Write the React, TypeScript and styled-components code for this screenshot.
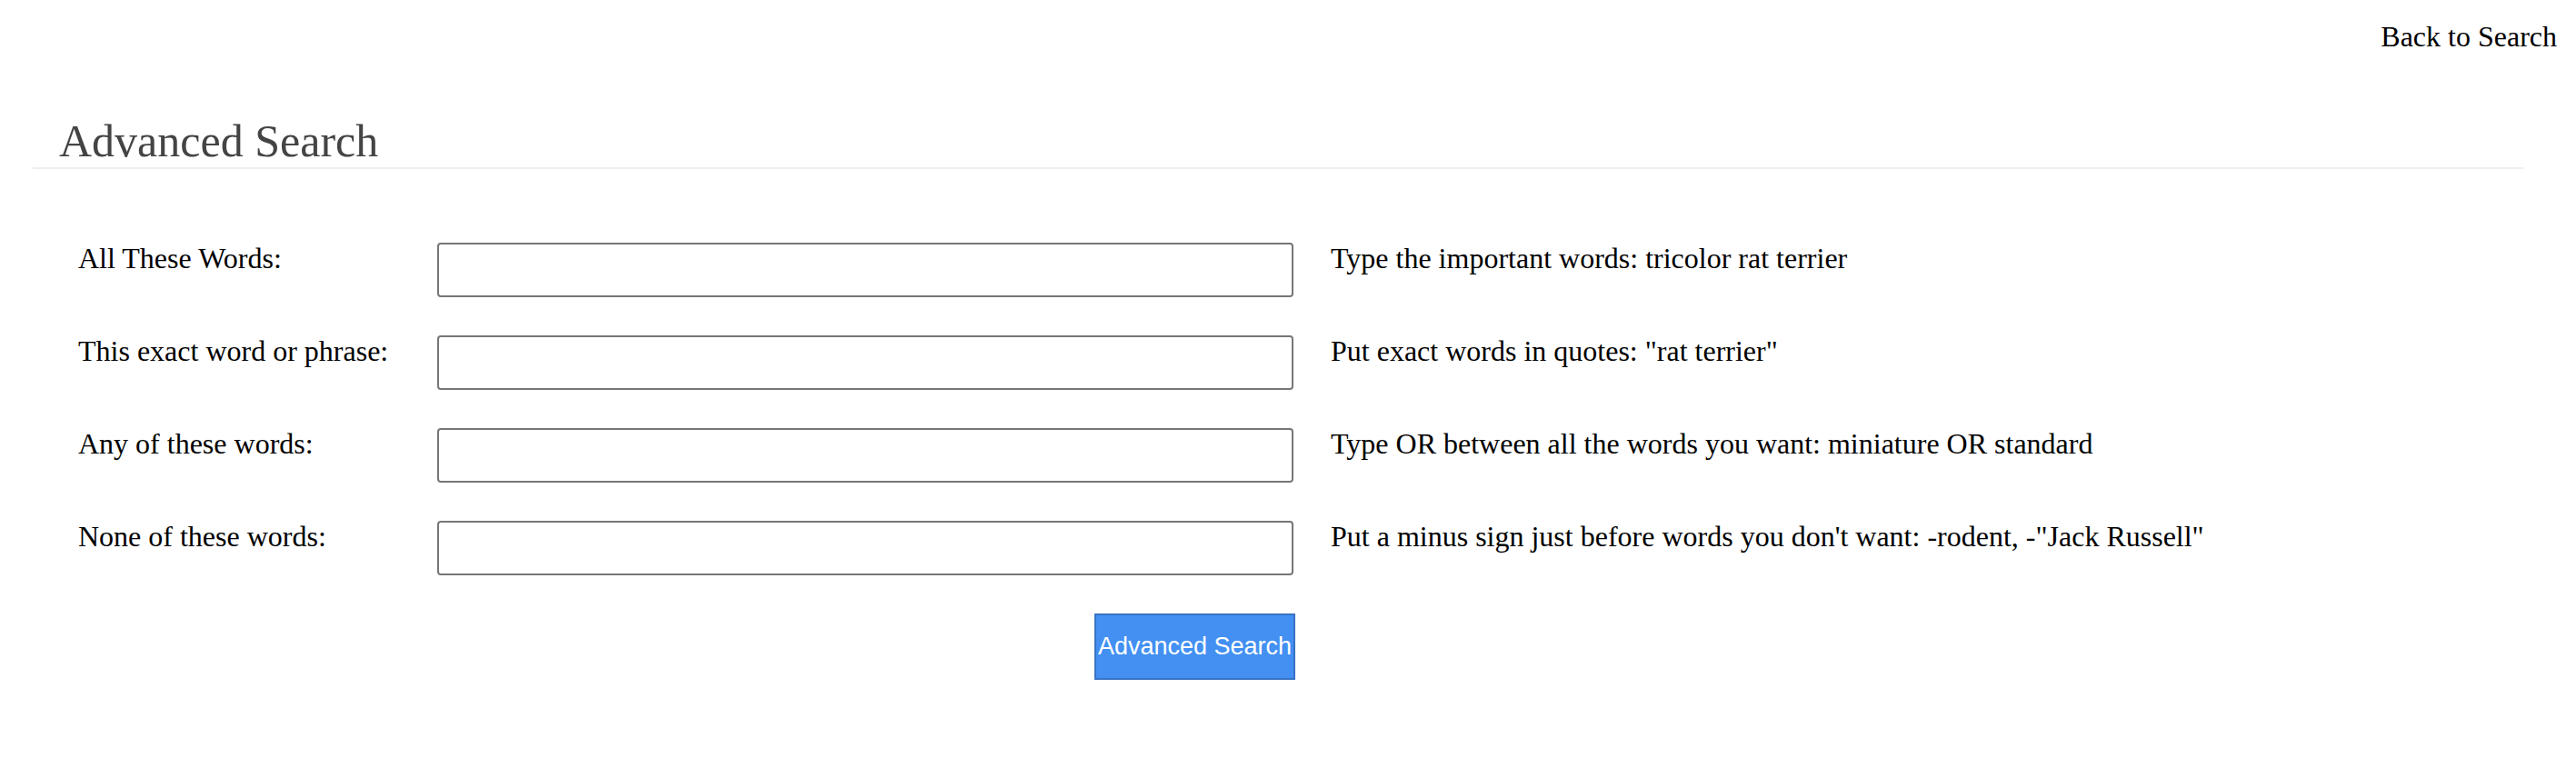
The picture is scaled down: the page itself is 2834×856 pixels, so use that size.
import React from 'react'
import styled, { createGlobalStyle } from 'styled-components'

const GlobalStyle = createGlobalStyle`
  body {
    margin: 16px;
    font-family: 'Liberation Serif', 'Times New Roman', serif;
    font-size: 32px;
    color: #000;
    background: #fff;
  }
`

const fields = [
  { label: 'All These Words:', help: 'Type the important words: tricolor rat terrier' },
  { label: 'This exact word or phrase:', help: 'Put exact words in quotes: "rat terrier"' },
  { label: 'Any of these words:', help: 'Type OR between all the words you want: miniature OR standard' },
  { label: 'None of these words:', help: 'Put a minus sign just before words you don\'t want: -rodent, -"Jack Russell"' },
]

const App = () => (
  <>
    <GlobalStyle />
    <TopBar>
      <BackLink href="#">Back to Search</BackLink>
    </TopBar>
    <Header>
      <Title>Advanced Search</Title>
    </Header>
    <Form onSubmit={(e) => e.preventDefault()}>
      {fields.map((f) => (
        <React.Fragment key={f.label}>
          <Label>{f.label}</Label>
          <Input type="text" />
          <Help>{f.help}</Help>
        </React.Fragment>
      ))}
      <Spacer />
      <SubmitButton type="submit">Advanced Search</SubmitButton>
    </Form>
  </>
)

const TopBar = styled.div`
  display: flex;
  justify-content: flex-end;
  padding: 6px 5px 0 0;
`
const BackLink = styled.a`
  color: #000;
  text-decoration: none;
`
const Header = styled.div`
  margin: 67px 42px 0 20px;
  border-bottom: 2px solid #eee;
`
const Title = styled.h2`
  margin: 0;
  padding-left: 29px;
  font-size: 50px;
  font-weight: normal;
  color: #444;
`
const Form = styled.form`
  display: grid;
  grid-template-columns: 395px 942px 1fr;
  row-gap: 42px;
  align-items: start;
  margin-top: 81px;
  padding-left: 70px;
`
const Label = styled.div`
  margin-top: -1px;
`
const Input = styled.input`
  box-sizing: border-box;
  width: 942px;
  height: 60px;
  margin: 0;
  border: 2px solid #767676;
  border-radius: 4px;
  font-size: 26px;
`
const Help = styled.div`
  padding-left: 41px;
  margin-top: -1px;
`
const Spacer = styled.div``
const SubmitButton = styled.button`
  justify-self: end;
  box-sizing: border-box;
  width: 221px;
  height: 73px;
  margin: 0 -2px 0 0;
  padding: 0;
  background: #4390f2;
  border: 2px solid #3872c4;
  border-radius: 0;
  color: #fff;
  font-family: 'Liberation Sans', Arial, sans-serif;
  font-size: 27px;
  cursor: pointer;
`

export default App
